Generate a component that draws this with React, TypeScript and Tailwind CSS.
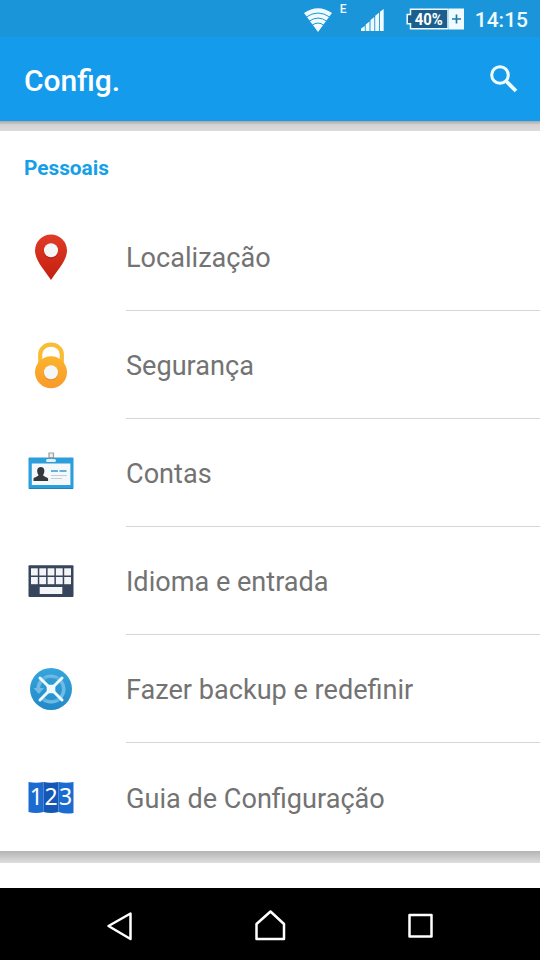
import React from 'react';

interface SettingItem {
  label: string;
  icon: React.ReactNode;
}

const LocationIcon = () => (
  <svg width="48" height="48" viewBox="0 0 48 48">
    <defs>
      <linearGradient id="pin" x1="0" y1="0" x2="0" y2="1">
        <stop offset="0" stopColor="#e03a28" />
        <stop offset="1" stopColor="#c4200f" />
      </linearGradient>
    </defs>
    <path d="M24 1.500a16 16 0 0 0-16 16C8 28 19 39 24 47c5-8 16-19 16-29.500a16 16 0 0 0-16-16z" fill="url(#pin)" />
    <circle cx="24" cy="18.500" r="7.200" fill="#a81a0e" opacity=".55" />
    <circle cx="24" cy="17.300" r="7" fill="#f4f6f8" />
  </svg>
);

const LockIcon = () => (
  <svg width="48" height="48" viewBox="0 0 48 48">
    <defs>
      <linearGradient id="lock" x1="0" y1="0" x2="0" y2="1">
        <stop offset="0" stopColor="#fbb42c" />
        <stop offset="1" stopColor="#f99a2a" />
      </linearGradient>
    </defs>
    <path d="M13.200 24V13.200a10.800 9.500 0 0 1 21.600 0V24" fill="none" stroke="#fbbc35" strokeWidth="4.200" />
    <circle cx="24" cy="31.300" r="16" fill="url(#lock)" />
    <circle cx="24" cy="32.300" r="7.200" fill="#e08420" opacity=".6" />
    <circle cx="24" cy="31.300" r="7" fill="#f4f6f8" />
  </svg>
);

const AccountIcon = () => (
  <svg width="48" height="48" viewBox="0 0 48 48">
    <rect x="1.500" y="8.500" width="45" height="31.500" rx="1" fill="#2c9edb" />
    <path d="M2 39.500h44" stroke="#2282b8" />
    <rect x="4.800" y="14.500" width="38.600" height="21.500" fill="#f5f8fa" />
    <path d="M6.500 32v-2.500c1-1.500 5-2 5-3.500-2.400-3.500-1.500-8 2.300-8s4.700 4.500 2.300 8c0 1.500 4 2 5 3.500V32z" fill="#34383c" />
    <path d="M24 22h7M32.500 22h7" stroke="#5fb4dc" strokeWidth="1.800" />
    <path d="M24 26.500h16M24 29.500h11" stroke="#c8cdd0" strokeWidth="1" />
    <rect x="19" y="10" width="10" height="3" rx="1.500" fill="#e6eeee" />
    <path d="M22 4h4.500v4.500H22zM24.200 8.500V10" fill="#eee" stroke="#9ba0a3" strokeWidth="1.200" />
  </svg>
);

const KeyboardIcon = () => (
  <svg width="48" height="48" viewBox="0 0 48 48">
    <rect x="1.500" y="8.300" width="45" height="31.700" rx="1" fill="#36455c" />
    {[11.3, 20].map((y) =>
      [4, 12.3, 20.6, 28.9, 37.2].map((x) => (
        <rect key={`${x}-${y}`} x={x} y={y} width="6.800" height="7.200" fill="#f3f5f7" />
      ))
    )}
    <rect x="12.700" y="30" width="22.600" height="7" fill="#f3f5f7" />
  </svg>
);

const BackupIcon = () => (
  <svg width="48" height="48" viewBox="0 0 48 48">
    <defs>
      <linearGradient id="backup" x1="0" y1="0" x2="0" y2="1">
        <stop offset="0" stopColor="#35a5de" />
        <stop offset="1" stopColor="#2289c7" />
      </linearGradient>
    </defs>
    <circle cx="24" cy="24" r="21" fill="url(#backup)" />
    <path d="M11.300 24a12.700 12.700 0 1 1 4.200 9.500" fill="none" stroke="#6fbbe3" strokeWidth="3.600" />
    <path d="M6.500 23h10.500l-5.200 6z" fill="#6fbbe3" />
    <path d="M24 24L12.500 12.500h23l-23 23h23z" fill="#2b97d2" opacity=".35" />
    <path d="M13 13l22 22M35 13l-22 22" stroke="#effaff" strokeWidth="3" strokeLinecap="round" />
    <rect x="19.700" y="19.700" width="8.600" height="8.600" rx="1.500" fill="#effaff" />
  </svg>
);

const GuideIcon = () => (
  <svg width="48" height="48" viewBox="0 0 48 48">
    <path d="M1.500 9q7.500 1.500 15 0v30q-7.500 1.800-15 0z" fill="#1c6bd0" />
    <path d="M16.500 9q7.500 1.500 15 0v30q-7.500 1.800-15 0z" fill="#1557b4" />
    <path d="M31.500 9q7.500 1.500 15 0v31q-7.500 1.500-15-1z" fill="#1c6bd0" />
    <text x="24.700" y="32.200" textAnchor="middle" fontSize="23" letterSpacing="1.400" fill="#fff" fontFamily="'Noto Sans', sans-serif">
      123
    </text>
  </svg>
);

const items: SettingItem[] = [
  { label: 'Localização', icon: <LocationIcon /> },
  { label: 'Segurança', icon: <LockIcon /> },
  { label: 'Contas', icon: <AccountIcon /> },
  { label: 'Idioma e entrada', icon: <KeyboardIcon /> },
  { label: 'Fazer backup e redefinir', icon: <BackupIcon /> },
  { label: 'Guia de Configuração', icon: <GuideIcon /> },
];

function StatusBar() {
  return (
    <div className="flex h-[37px] shrink-0 items-start justify-end bg-[#1b95d9] pr-3 text-[#effbff]">
      <svg className="mt-2 mr-2" width="28" height="24" viewBox="0 0 28 24">
        <path d="M0 5Q14-4.500 28 5L14 24z" fill="#effbff" />
        <path d="M2 9.200Q14 .8 26 9.200M5 13.300Q14 6.800 23 13.300M8 17.300Q14 12.800 20 17.300" fill="none" stroke="#1b95d9" strokeWidth="1" />
      </svg>
      <span className="mt-[2px] mr-[14px] w-[7px] text-[12px] leading-[14px] font-medium">E</span>
      <svg className="mt-[9px] mr-[22px]" width="23" height="22" viewBox="0 0 23 22">
        <path d="M0 22v-2.500L3.800 17v5zM4.700 22v-6.500l3.800-3V22zM9.500 22V11l3.800-3v14zM14.200 22V6.800l3.800-3V22zM18.900 22V2.800L22.700 0v22z" fill="#effbff" />
      </svg>
      <div className="mt-2 mr-[11px] flex h-[22px] items-center">
        <svg width="58" height="22" viewBox="0 0 58 22">
          <path d="M4.500 1.200H42v19.600H4.500v-5H1.200V6.500h3.300z" fill="#1c5f8c" stroke="#effbff" strokeWidth="1.500" />
          <rect x="43" y=".5" width="15" height="21" fill="#effbff" />
          <path d="M50.500 6.500v9M46 11h9" stroke="#1c78ad" strokeWidth="1.700" />
          <text x="22.800" y="16.500" textAnchor="middle" fontSize="16" fontWeight="700" textLength="28" lengthAdjust="spacingAndGlyphs" fill="#fff">
            40%
          </text>
        </svg>
      </div>
      <span className="mt-[6px] text-[21px] leading-7 font-medium">14:15</span>
    </div>
  );
}

export default function App() {
  return (
    <div className="flex h-[960px] w-[540px] flex-col overflow-hidden bg-white font-['Roboto',sans-serif]">
      <StatusBar />
      <header className="flex h-[84px] shrink-0 items-center justify-between bg-[#159bec] pr-[22px] pl-6">
        <h1 className="pt-1 text-[30px] leading-9 font-medium text-white">Config.</h1>
        <svg width="28" height="28" viewBox="0 0 28 28" fill="none" stroke="#effdff">
          <circle cx="10" cy="10" r="8.300" strokeWidth="3" />
          <path d="M16 16l10 10" strokeWidth="3.800" />
        </svg>
      </header>
      <div className="h-[10px] shrink-0 bg-linear-to-b from-[#a9a9a9] via-[#d5d3d4] via-40% to-[#dcdadb]" />

      <main className="shrink-0">
        <h2 className="h-[72px] pt-[23px] pl-6 text-[20.800px] leading-7 font-bold text-[#149fe6]">Pessoais</h2>
        {items.map((item, index) => (
          <div key={item.label} className="flex h-[108px] items-center pl-[27px]">
            {item.icon}
            <div
              className={`ml-[51px] flex h-full flex-1 items-center text-[27.100px] text-[#737373] ${
                index < items.length - 1 ? 'border-b border-[#d6d6d6] pt-[3px]' : 'pt-1'
              }`}
            >
              {item.label}
            </div>
          </div>
        ))}
      </main>
      <div className="h-3 shrink-0 bg-linear-to-b from-[#b4b4b4] to-[#dedede]" />
      <div className="h-[25px] shrink-0 bg-white" />

      <nav className="flex h-[72px] shrink-0 items-center bg-black pt-1">
        <svg width="540" height="36" viewBox="0 0 540 36" fill="none" stroke="#fff" strokeWidth="2.500" strokeLinejoin="round">
          <path d="M130.500 5.500v25.500L108.500 18z" />
          <path d="M270.500 3.500l13.500 12.500v15h-27.500v-15z" />
          <rect x="409.500" y="7" width="22" height="21.500" />
        </svg>
      </nav>
    </div>
  );
}
